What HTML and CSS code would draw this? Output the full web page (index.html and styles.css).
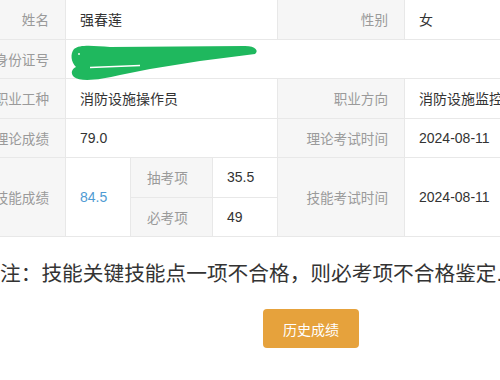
FILE: index.html
```html
<!DOCTYPE html>
<html lang="zh-CN">
<head>
<meta charset="utf-8">
<title>成绩查询</title>
<link rel="stylesheet" href="styles.css">
</head>
<body>
<div class="page">
  <table class="info">
    <colgroup>
      <col class="c-a"><col class="c-b"><col class="c-c"><col class="c-d"><col class="c-e"><col class="c-f">
    </colgroup>
    <tr>
      <td class="label">姓名</td>
      <td class="value" colspan="3">强春莲</td>
      <td class="label">性别</td>
      <td class="value">女</td>
    </tr>
    <tr>
      <td class="label">身份证号</td>
      <td class="value" colspan="5"></td>
    </tr>
    <tr>
      <td class="label">职业工种</td>
      <td class="value" colspan="3">消防设施操作员</td>
      <td class="label">职业方向</td>
      <td class="value">消防设施监控操作</td>
    </tr>
    <tr>
      <td class="label">理论成绩</td>
      <td class="value" colspan="3">79.0</td>
      <td class="label">理论考试时间</td>
      <td class="value">2024-08-11</td>
    </tr>
    <tr>
      <td class="label" rowspan="2">技能成绩</td>
      <td class="value score" rowspan="2">84.5</td>
      <td class="label sub">抽考项</td>
      <td class="value">35.5</td>
      <td class="label" rowspan="2">技能考试时间</td>
      <td class="value" rowspan="2">2024-08-11</td>
    </tr>
    <tr>
      <td class="label sub">必考项</td>
      <td class="value">49</td>
    </tr>
  </table>

  <svg class="scribble" width="200" height="44" viewBox="68 42 200 44" aria-hidden="true">
    <path d="M74,50 C80,45 95,47 110,48 L245,47 C256,47 259,52 255,55 L200,62 L150,70 L120,76 C100,81 80,83 74,78 C70,74 72,70 76,68 C71,63 70,55 74,50 Z" fill="#1fb85e"/>
    <path d="M90,68.5 L140,66.5" stroke="#ffffff" stroke-width="1.4" fill="none"/>
    <circle cx="79" cy="55" r="1" fill="#e9f7ee"/>
  </svg>

  <p class="note">注：技能关键技能点一项不合格，则必考项不合格鉴定.</p>

  <div class="actions">
    <button class="btn-history" type="button">历史成绩</button>
  </div>
</div>
</body>
</html>
```

FILE: styles.css
```css
html, body {
  margin: 0;
  padding: 0;
  background: #ffffff;
}

body {
  width: 500px;
  height: 380px;
  overflow: hidden;
  font-family: "Liberation Sans", "Noto Sans CJK SC", sans-serif;
  color: #333333;
}

.page {
  position: relative;
  width: 500px;
}

.info {
  border-collapse: collapse;
  table-layout: fixed;
  width: 564px;
  margin-left: -30px;
  margin-top: -1px;
}

.c-a { width: 95px; }
.c-b { width: 65px; }
.c-c { width: 82px; }
.c-d { width: 65px; }
.c-e { width: 127px; }
.c-f { width: 130px; }

.info tr {
  height: 39.5px;
}

.info td {
  border: 1px solid #e8e8e8;
  padding: 0;
  white-space: nowrap;
  overflow: hidden;
  vertical-align: middle;
}

.label {
  background: #f6f6f6;
  color: #9a9a9a;
  font-size: 13.6px;
  text-align: right;
  padding-right: 16px !important;
}

.label.sub {
  text-align: left;
  padding-left: 16px !important;
  padding-right: 0 !important;
}

.value {
  background: #ffffff;
  color: #333333;
  font-size: 14px;
  padding-left: 14px !important;
}

.value.score {
  color: #4f9bd3;
}

.scribble {
  position: absolute;
  left: 68px;
  top: 42px;
}

.note {
  margin: 23px 0 0 0;
  font-size: 20.7px;
  line-height: 28px;
  color: #333333;
  white-space: nowrap;
}

.actions {
  margin-top: 21px;
  padding-left: 263px;
}

.btn-history {
  width: 96px;
  height: 39px;
  border: none;
  border-radius: 4px;
  background: #e6a23c;
  color: #ffffff;
  font-family: "Liberation Sans", "Noto Sans CJK SC", sans-serif;
  font-size: 14px;
  padding: 0;
}
```
